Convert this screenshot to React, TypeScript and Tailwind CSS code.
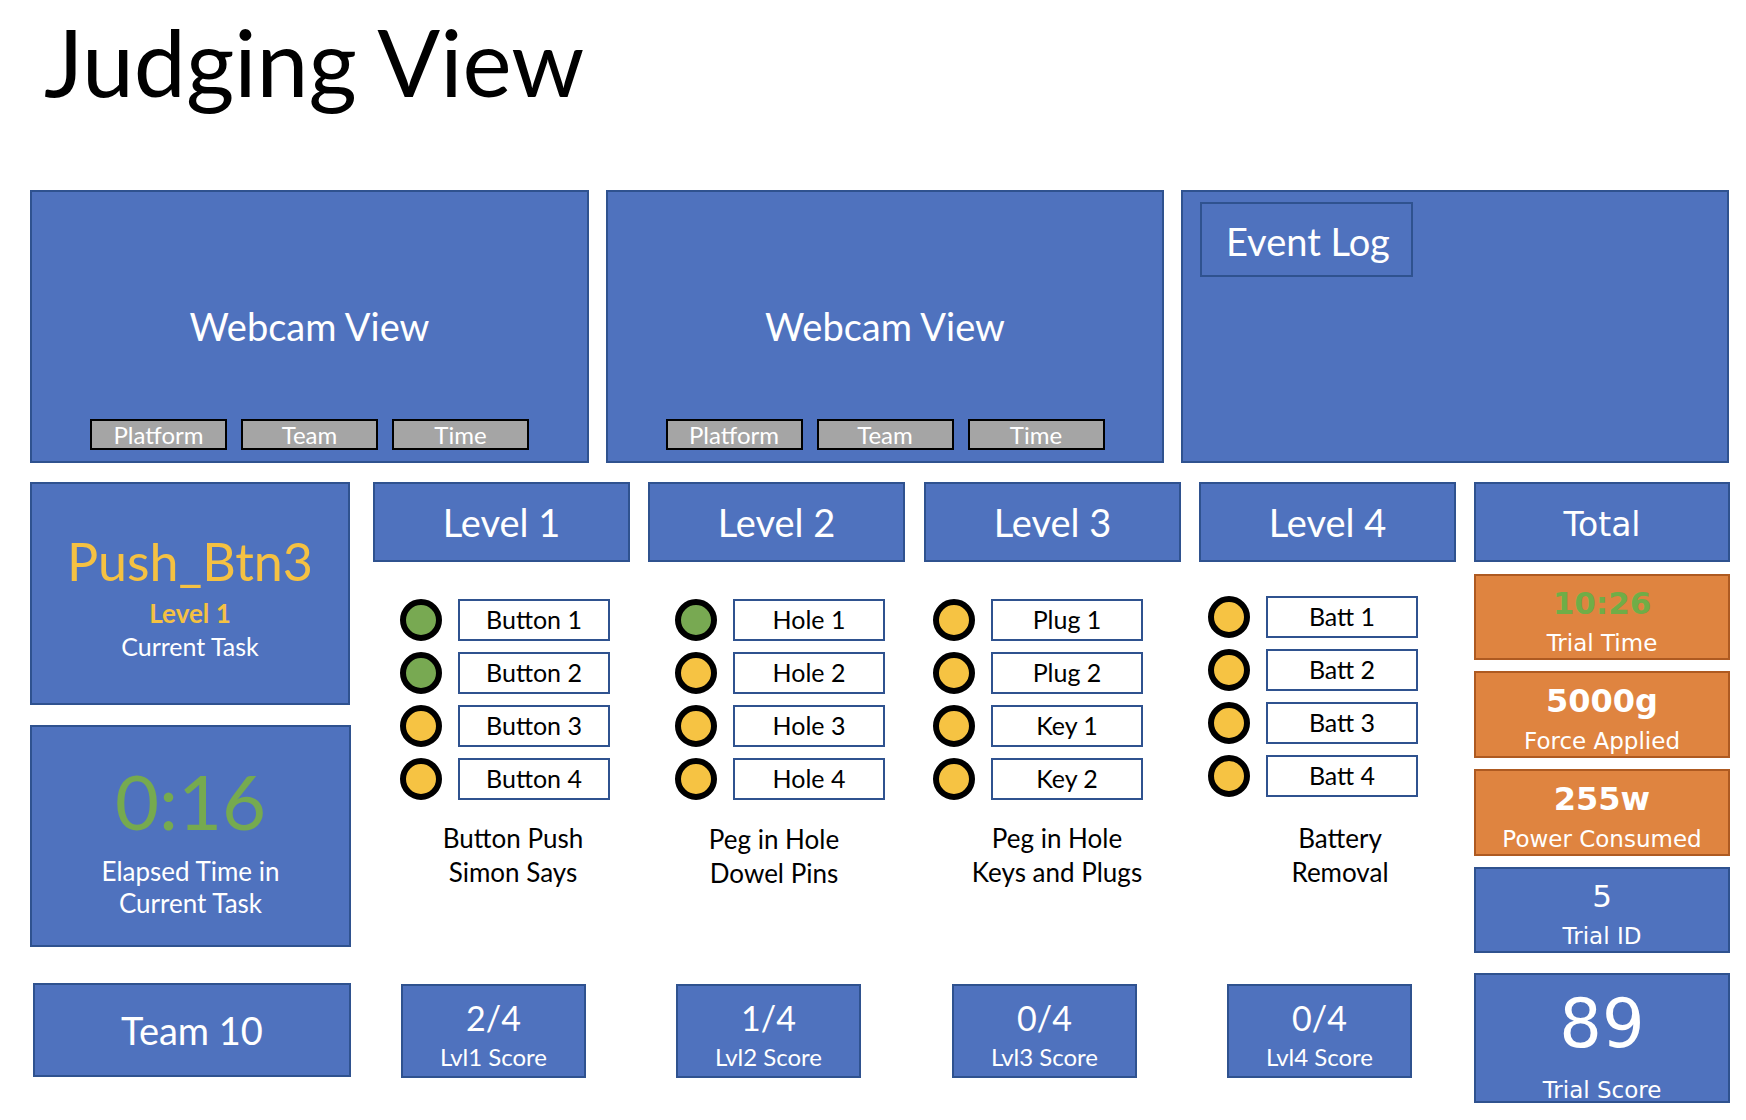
import React from "react";

type Lamp = "green" | "yellow";

interface Level {
	title: string;
	items: [string, Lamp][];
	caption: [string, string];
	score: string;
	scoreLabel: string;
	itemsTop: string;
	itemsPad: string;
	captionCls: string;
}

const levels: Level[] = [
	{
		title: "Level 1",
		items: [
			["Button 1", "green"],
			["Button 2", "green"],
			["Button 3", "yellow"],
			["Button 4", "yellow"],
		],
		caption: ["Button Push", "Simon Says"],
		score: "2/4",
		scoreLabel: "Lvl1 Score",
		itemsTop: "mt-[37px]",
		itemsPad: "pl-[27px]",
		captionCls: "mt-[21px] pl-[23px]",
	},
	{
		title: "Level 2",
		items: [
			["Hole 1", "green"],
			["Hole 2", "yellow"],
			["Hole 3", "yellow"],
			["Hole 4", "yellow"],
		],
		caption: ["Peg in Hole", "Dowel Pins"],
		score: "1/4",
		scoreLabel: "Lvl2 Score",
		itemsTop: "mt-[37px]",
		itemsPad: "pl-[27px]",
		captionCls: "mt-[22px] pr-[5px]",
	},
	{
		title: "Level 3",
		items: [
			["Plug 1", "yellow"],
			["Plug 2", "yellow"],
			["Key 1", "yellow"],
			["Key 2", "yellow"],
		],
		caption: ["Peg in Hole", "Keys and Plugs"],
		score: "0/4",
		scoreLabel: "Lvl3 Score",
		itemsTop: "mt-[37px]",
		itemsPad: "pl-[9px]",
		captionCls: "mt-[21px] pl-[9px]",
	},
	{
		title: "Level 4",
		items: [
			["Batt 1", "yellow"],
			["Batt 2", "yellow"],
			["Batt 3", "yellow"],
			["Batt 4", "yellow"],
		],
		caption: ["Battery", "Removal"],
		score: "0/4",
		scoreLabel: "Lvl4 Score",
		itemsTop: "mt-[34px]",
		itemsPad: "pl-[9px]",
		captionCls: "mt-[24px] pl-[25px]",
	},
];

const blue = "bg-[#4f72be] border-2 border-[#2f528f]";
const orange = "bg-[#df8440] border-2 border-[#ae5a21]";

const WebcamPanel = ({ width }: { width: string }) => (
	<div className={`${width} h-[273px] ${blue} flex flex-col items-center`}>
		<div className="pt-[115px] text-[38px] leading-none text-white">Webcam View</div>
		<div className="mt-[74px] flex gap-[14px]">
			{["Platform", "Team", "Time"].map((b) => (
				<div
					key={b}
					className="w-[137px] h-[31px] bg-[#a5a5a5] border-2 border-black flex items-center justify-center text-[24px] leading-none text-white"
				>
					{b}
				</div>
			))}
		</div>
	</div>
);

const LevelColumn = ({ level }: { level: Level }) => (
	<div className="w-[257px] h-[596px] flex flex-col">
		<div className={`h-[80px] ${blue} flex items-center justify-center text-[38px] text-white`}>
			{level.title}
		</div>
		<div className={`${level.itemsTop} ${level.itemsPad} flex flex-col gap-[11px]`}>
			{level.items.map(([label, lamp]) => (
				<div key={label} className="flex items-center gap-[16px]">
					<div
						className={`w-[42px] h-[42px] rounded-full border-[6px] border-black ${
							lamp === "green" ? "bg-[#78a952]" : "bg-[#f6c343]"
						}`}
					/>
					<div className="w-[152px] h-[42px] bg-white border-2 border-[#2f528f] flex items-center justify-center text-[25px] text-black">
						{label}
					</div>
				</div>
			))}
		</div>
		<div className={`${level.captionCls} text-center text-[26px] leading-[34px] text-black`}>
			<div>{level.caption[0]}</div>
			<div>{level.caption[1]}</div>
		</div>
		<div className={`mt-auto ml-[28px] w-[185px] h-[94px] ${blue} flex flex-col items-center text-white`}>
			<div className="pt-[15px] text-[34px] leading-none">{level.score}</div>
			<div className="mt-[10px] text-[24px] leading-none">{level.scoreLabel}</div>
		</div>
	</div>
);

const StatBox = ({
	value,
	label,
	cls,
	valueCls,
	h,
	pt,
}: {
	value: string;
	label: string;
	cls: string;
	valueCls: string;
	h: string;
	pt: string;
}) => (
	<div className={`${h} ${cls} ${pt} flex flex-col items-center text-white`}>
		<div className={`leading-[40px] ${valueCls}`}>{value}</div>
		<div className="leading-[40px] text-[23px]">{label}</div>
	</div>
);

export default function App() {
	return (
		<div
			className="w-[1746px] h-[1120px] bg-white overflow-hidden"
			style={{ fontFamily: "Lato, 'Open Sans', sans-serif" }}
		>
			{/* Title */}
			<div className="h-[190px] pl-[44px] pt-[15px]">
				<h1 className="text-[93px] font-normal leading-none text-black">Judging View</h1>
			</div>

			{/* Webcams + event log */}
			<div className="flex pl-[30px]">
				<WebcamPanel width="w-[559px]" />
				<div className="ml-[17px]">
					<WebcamPanel width="w-[558px]" />
				</div>
				<div className={`ml-[17px] w-[548px] h-[273px] ${blue} pl-[17px] pt-[10px]`}>
					<div className="w-[213px] h-[75px] border-2 border-[#2f528f] flex items-center pl-[24px] pt-[3px] text-[38px] text-white">
						Event Log
					</div>
				</div>
			</div>

			{/* Task area */}
			<div className="flex pl-[30px] pt-[19px]">
				{/* Left column */}
				<div className="w-[321px] flex flex-col">
					<div className={`w-[320px] h-[223px] ${blue} flex flex-col items-center`}>
						<div className="pt-[51px] text-[52px] leading-none text-[#f5c142]">Push_Btn3</div>
						<div className="mt-[13px] text-[26px] leading-none font-bold text-[#f5c142]">Level 1</div>
						<div className="mt-[8px] text-[25px] leading-none text-white">Current Task</div>
					</div>
					<div className={`mt-[20px] h-[222px] ${blue} flex flex-col items-center`}>
						<div className="pt-[36px] text-[76px] leading-none text-[#76aa4f]">0:16</div>
						<div className="mt-[16px] text-center text-[26px] leading-[32px] text-white">
							<div>Elapsed Time in</div>
							<div>Current Task</div>
						</div>
					</div>
					<div className={`mt-[36px] ml-[3px] w-[318px] h-[94px] ${blue} flex items-center justify-center text-[38px] text-white`}>
						Team 10
					</div>
				</div>

				<div className="ml-[22px] flex">
					<LevelColumn level={levels[0]} />
					<div className="ml-[18px]">
						<LevelColumn level={levels[1]} />
					</div>
					<div className="ml-[19px]">
						<LevelColumn level={levels[2]} />
					</div>
					<div className="ml-[18px]">
						<LevelColumn level={levels[3]} />
					</div>
				</div>

				{/* Totals */}
				<div
					className="ml-[18px] w-[256px] flex flex-col"
					style={{ fontFamily: "'DejaVu Sans', Verdana, sans-serif" }}
				>
					<div className={`h-[80px] ${blue} pt-[5px] flex items-center justify-center text-[33px] text-white`}>
						Total
					</div>
					<div className="mt-[12px]">
						<StatBox
							value="10:26"
							label="Trial Time"
							cls={orange}
							valueCls="text-[31px] font-bold text-[#70ad47]"
							h="h-[86px]"
							pt="pt-[7px]"
						/>
					</div>
					<div className="mt-[11px]">
						<StatBox
							value="5000g"
							label="Force Applied"
							cls={orange}
							valueCls="text-[32px] font-bold"
							h="h-[87px]"
							pt="pt-[8px]"
						/>
					</div>
					<div className="mt-[11px]">
						<StatBox
							value="255w"
							label="Power Consumed"
							cls={orange}
							valueCls="text-[32px] font-bold"
							h="h-[87px]"
							pt="pt-[8px]"
						/>
					</div>
					<div className="mt-[11px]">
						<StatBox
							value="5"
							label="Trial ID"
							cls={blue}
							valueCls="text-[31px]"
							h="h-[86px]"
							pt="pt-[7px]"
						/>
					</div>
					<div className={`mt-[20px] h-[130px] ${blue} flex flex-col items-center text-white`}>
						<div className="pt-[16px] text-[67px] leading-none">89</div>
						<div className="mt-[12px] text-[23px] leading-[40px]">Trial Score</div>
					</div>
				</div>
			</div>
		</div>
	);
}
